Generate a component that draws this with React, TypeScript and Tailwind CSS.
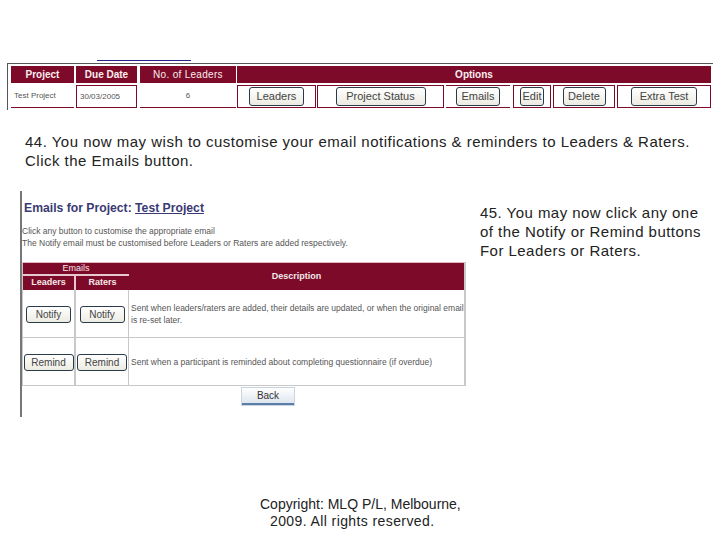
const font = "font-['Liberation_Sans',Arial,sans-serif]"

function Btn({ label, className }: { label: string; className: string }) {
  return (
    <div
      className={`flex items-center justify-center whitespace-nowrap rounded-[3px] border border-[#2a3a48] bg-gradient-to-b from-white to-[#ecebe2] text-[#444] ${className}`}
    >
      {label}
    </div>
  )
}

const optionCells = [
  { label: "Leaders", cell: "w-[79px] border", btn: "w-[55px]" },
  { label: "Project Status", cell: "ml-[1px] w-[127px] border", btn: "w-[90px]" },
  { label: "Emails", cell: "ml-[2px] w-[64px] border-y", btn: "w-[44px]" },
  { label: "Edit", cell: "ml-[3px] w-[38px] border", btn: "w-[24px]" },
  { label: "Delete", cell: "ml-[2px] w-[62px] border", btn: "w-[43px]" },
  { label: "Extra Test", cell: "ml-[2px] w-[94px] border", btn: "w-[66px]" },
]

function ProjectTable() {
  return (
    <div className="ml-[7px] h-[47px] w-[706px] border-l border-t border-[#555] pl-[3px] pt-[2px]">
      <div className="flex h-[17px] text-[10px] font-bold text-[#fbeef0]">
        <div className="flex w-[63px] items-center justify-center bg-[#7d0a28]">Project</div>
        <div className="ml-[2px] flex w-[61px] items-center justify-center bg-[#7d0a28]">Due Date</div>
        <div className="ml-[3px] flex w-[96px] items-center justify-center bg-[#7d0a28] font-normal tracking-[0.3px]">No. of Leaders</div>
        <div className="ml-[1px] flex w-[474px] items-center justify-center bg-[#7d0a28]">Options</div>
      </div>
      <div className="mt-[2px] flex h-[23px] text-[8px] text-[#555]">
        <div className="flex w-[63px] items-center border-b border-[#7d0a28] pl-[3px]">Test Project</div>
        <div className="ml-[2px] flex w-[61px] items-center border border-[#7d0a28] pl-[3px]">30/03/2005</div>
        <div className="ml-[3px] flex w-[96px] items-center justify-center border-b border-[#7d0a28]">6</div>
        <div className="ml-[1px] flex text-[11px]">
          {optionCells.map((o) => (
            <div key={o.label} className={`flex items-center justify-center border-[#7d0a28] ${o.cell}`}>
              <Btn label={o.label} className={`h-[19px] ${o.btn}`} />
            </div>
          ))}
        </div>
      </div>
    </div>
  )
}

function EmailRow({ notify, children }: { notify: boolean; children: React.ReactNode }) {
  const label = notify ? "Notify" : "Remind"
  const w = notify ? "w-[45px]" : "w-[50px]"
  return (
    <div className="flex h-[48px] border-b border-[#c8c8c8]">
      <div className="flex w-[53px] items-center justify-center border-r-2 border-[#c8c8c8] pt-[2px]">
        <Btn label={label} className={`h-[17px] text-[10px] ${w}`} />
      </div>
      <div className="flex w-[53px] items-center justify-center border-r border-[#c8c8c8] pt-[2px]">
        <Btn label={label} className={`h-[17px] text-[10px] ${w}`} />
      </div>
      <div className="flex-1 whitespace-nowrap pl-[2px] text-[8.5px] leading-[12px] text-[#555]">{children}</div>
    </div>
  )
}

function EmailsPanel() {
  return (
    <div className="ml-[20px] h-[226px] w-[460px] border-l-2 border-[#777] text-[#444]">
      <div className="ml-[2px] pt-[10px] text-[12.2px] font-bold leading-[14px] text-[#3a3a72]">
        Emails for Project: <span className="underline">Test Project</span>
      </div>
      <div className="mt-[10px] whitespace-nowrap text-[8.5px] leading-[12px] text-[#555]">
        <div>Click any button to customise the appropriate email</div>
        <div>The Notify email must be customised before Leaders or Raters are added respectively.</div>
      </div>
      <div className="mt-[13px] h-[124px] w-[444px] border-r-2 border-l border-[#c8c8c8]">
        <div className="flex h-[28px] border-t border-[#e0b8c2] bg-[#7d0a28] text-[9px] font-bold text-[#f5e8ea]">
          <div className="w-[106px]">
            <div className="flex h-[13px] items-center justify-center border-b-2 border-[#e8c8d0] font-normal">Emails</div>
            <div className="flex h-[14px]">
              <div className="flex w-[53px] items-center justify-center border-r-2 border-[#e8c8d0]">Leaders</div>
              <div className="flex w-[53px] items-center justify-center">Raters</div>
            </div>
          </div>
          <div className="flex flex-1 items-center justify-center">Description</div>
        </div>
        <EmailRow notify>
          <div className="pt-[12px]">
            Sent when leaders/raters are added, their details are updated, or when the original email
            <br />
            is re-set later.
          </div>
        </EmailRow>
        <EmailRow notify={false}>
          <div className="pt-[18px]">Sent when a participant is reminded about completing questionnaire (if overdue)</div>
        </EmailRow>
      </div>
      <div className="ml-[220px] mt-[2px] flex h-[17px] w-[52px] items-center justify-center border-b-2 border-[#5a7ea8] bg-gradient-to-b from-white to-[#dfe6ee] text-[10px] text-[#333] shadow-[0_0_0_1px_#c8d4e0]">
        Back
      </div>
    </div>
  )
}

export default function App() {
  return (
    <div className={`h-[540px] w-[720px] overflow-hidden bg-white ${font}`}>
      <div className="ml-[97px] h-[61px] w-[94px] border-b border-[#22228a]" />
      <div className="h-[2px]" />
      <ProjectTable />
      <p className="ml-[25px] mt-[22px] whitespace-nowrap text-[15px] leading-[19px] tracking-[0.49px] text-[#222]">
        44. You now may wish to customise your email notifications &amp; reminders to Leaders &amp; Raters.
        <br />
        Click the Emails button.
      </p>
      <div className="mt-[21px] flex">
        <EmailsPanel />
        <p className="mt-[12px] whitespace-nowrap text-[15px] leading-[19px] tracking-[0.46px] text-[#222]">
          45. You may now click any one
          <br />
          of the Notify or Remind buttons
          <br />
          For Leaders or Raters.
        </p>
      </div>
      <div className="ml-[260px] mt-[79px] whitespace-nowrap text-[14px] leading-[17px] text-[#222]">
        <p>Copyright: MLQ P/L, Melbourne,</p>
        <p className="ml-[10px] tracking-[0.4px]">2009. All rights reserved.</p>
      </div>
    </div>
  )
}
